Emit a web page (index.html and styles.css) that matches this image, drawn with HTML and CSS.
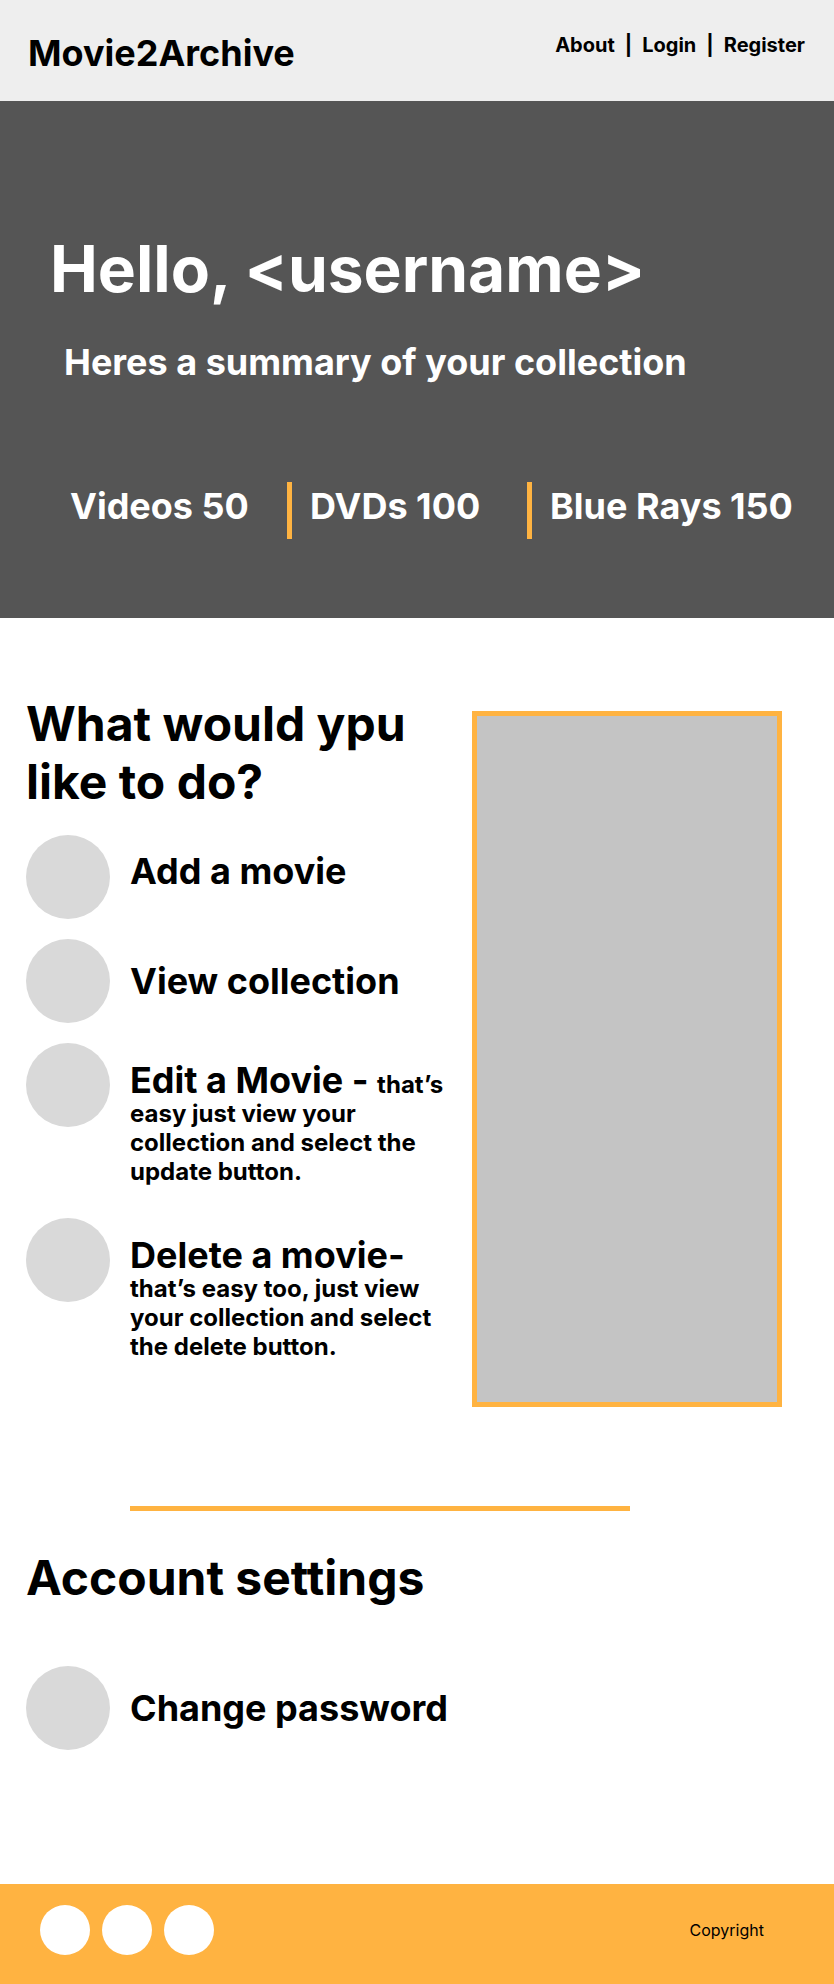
FILE: index.html
```html
<!DOCTYPE html>
<html lang="en">
<head>
<meta charset="utf-8">
<meta name="viewport" content="width=device-width, initial-scale=1">
<title>Movie2Archive</title>
<link rel="stylesheet" href="styles.css">
</head>
<body class="page">
  <header class="site-header">
    <a class="brand" href="#">Movie2Archive</a>
    <nav class="site-nav" aria-label="Main">
      <a class="site-nav-link" href="#">About</a>
      <span>|</span>
      <a class="site-nav-link" href="#">Login</a>
      <span>|</span>
      <a class="site-nav-link" href="#">Register</a>
    </nav>
  </header>

  <section class="hero">
    <h1 class="hero-title">Hello, &lt;username&gt;</h1>
    <p class="hero-lead">Heres a summary of your collection</p>
    <ul class="stats">
      <li class="stat">Videos 50</li>
      <li class="stat">DVDs 100</li>
      <li class="stat">Blue Rays 150</li>
    </ul>
  </section>

  <main class="content">
    <section class="tasks">
      <div class="tasks-main">
        <h2 class="section-title">What would ypu like to do?</h2>
        <ul class="actions">
          <li><a class="action" href="#"><span class="dot"></span><span class="action-label action-label-top">Add a movie</span></a></li>
          <li><a class="action" href="#"><span class="dot"></span><span class="action-label">View collection</span></a></li>
          <li class="action"><span class="dot"></span><p class="action-note"><strong class="action-name">Edit a Movie - </strong>that’s easy just view your collection and select the update button.</p></li>
          <li class="action"><span class="dot"></span><p class="action-note"><strong class="action-name">Delete a movie- </strong>that’s easy too, just view your collection and select the delete button.</p></li>
        </ul>
      </div>
      <div class="picture" role="img" aria-label="Collection preview"></div>
    </section>

    <hr class="divider">

    <section class="account">
      <h2 class="section-title">Account settings</h2>
      <a class="action" href="#"><span class="dot"></span><span class="action-label">Change password</span></a>
    </section>
  </main>

  <footer class="site-footer">
    <div class="social">
      <a class="social-link" href="#" aria-label="Social link 1"></a>
      <a class="social-link" href="#" aria-label="Social link 2"></a>
      <a class="social-link" href="#" aria-label="Social link 3"></a>
    </div>
    <p class="copyright">Copyright</p>
  </footer>
</body>
</html>
```

FILE: styles.css
```css
:root {
  --accent: #ffb341;
}

* {
  box-sizing: border-box;
}

.page {
  margin: 0;
  min-height: 100vh;
  display: flex;
  flex-direction: column;
  background: #fff;
  color: #000;
  font-family: Inter, "Liberation Sans", sans-serif;
  font-weight: 700;
}

a {
  color: inherit;
  text-decoration: none;
}

h1,
h2,
p,
ul {
  margin: 0;
  padding: 0;
}

ul {
  list-style: none;
}

.site-header {
  display: flex;
  justify-content: space-between;
  align-items: flex-start;
  padding: 31px 29px 26px 28px;
  background: #eee;
}

.brand {
  font-size: 36px;
  line-height: 44px;
}

.site-nav {
  display: flex;
  gap: 10px;
  padding-top: 2px;
  font-size: 20px;
  line-height: 24px;
}

.hero {
  padding: 129px 0 79px 50px;
  background: #555;
  color: #fff;
}

.hero-title {
  font-size: 64px;
  line-height: 77px;
}

.hero-lead {
  padding: 33px 0 0 14px;
  font-size: 36px;
  line-height: 44px;
}

.stats {
  display: grid;
  grid-template-columns: 217fr 240fr 307fr;
  padding: 98px 0 0 20px;
  font-size: 36px;
  line-height: 44px;
}

.stat {
  padding: 2px 0 11px;
  white-space: nowrap;
}

.stat + .stat {
  padding-left: 18px;
  border-left: 5px solid var(--accent);
}

.content {
  flex: 1;
  padding: 77px 52px 134px 26px;
}

.tasks {
  display: grid;
  grid-template-columns: minmax(0, 1fr) 310px;
  gap: 16px;
}

.section-title {
  font-size: 48px;
  line-height: 58px;
}

.actions {
  display: flex;
  flex-direction: column;
  gap: 20px;
  padding-top: 24px;
}

.action {
  display: flex;
  gap: 20px;
}

.dot {
  flex: none;
  width: 84px;
  height: 84px;
  border-radius: 50%;
  background: #d9d9d9;
}

.action-label {
  align-self: center;
  font-size: 36px;
  line-height: 44px;
}

.action-label-top {
  align-self: flex-start;
  padding-top: 14px;
}

.action-note {
  padding: 23px 0 12px;
  font-size: 24px;
  line-height: 29px;
}

.action-name {
  font-size: 36px;
  font-weight: inherit;
}

.picture {
  min-height: 696px;
  margin-top: 16px;
  align-self: start;
  border: 5px solid var(--accent);
  background: #c4c4c4;
}

.divider {
  width: 500px;
  max-width: 80%;
  height: 5px;
  margin: 99px 0 38px 104px;
  border: 0;
  background: var(--accent);
}

.account {
  display: flex;
  flex-direction: column;
  gap: 59px;
}

.site-footer {
  display: flex;
  justify-content: space-between;
  align-items: center;
  padding: 21px 70px 29px 40px;
  background: var(--accent);
}

.social {
  display: flex;
  gap: 12px;
}

.social-link {
  width: 50px;
  height: 50px;
  border-radius: 50%;
  background: #fff;
}

.copyright {
  font-size: 16px;
  font-weight: 400;
  line-height: 20px;
}
```
